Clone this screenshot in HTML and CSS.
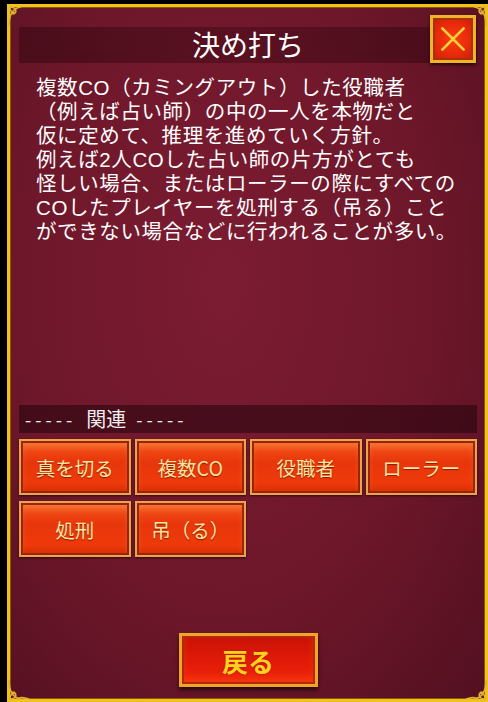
FILE: index.html
```html
<html lang="ja">

<head>
  <meta charset="utf-8">
  <title>決め打ち</title>
  <link rel="stylesheet" href="styles.css">
</head>

<body>

  <div class="frame">
    <!-- corner ornaments -->
    <svg class="corner tl" viewBox="0 0 24 24"><path d="M2 22 C2 10 6 4 14 3 M3 3 C8 3 10 6 8 9 C6 11 4 9 6 7 M3 3 C3 8 6 10 9 8" /></svg>
    <svg class="corner tr" viewBox="0 0 24 24"><path d="M22 22 C22 10 18 4 10 3 M21 3 C16 3 14 6 16 9 C18 11 20 9 18 7 M21 3 C21 8 18 10 15 8" /></svg>
    <svg class="corner bl" viewBox="0 0 24 24"><path d="M2 2 C2 14 6 20 14 21 M3 21 C8 21 10 18 8 15 C6 13 4 15 6 17 M3 21 C3 16 6 14 9 16 M10 21 C14 18 18 20 22 21" /></svg>
    <svg class="corner br" viewBox="0 0 24 24"><path d="M22 2 C22 14 18 20 10 21 M21 21 C16 21 14 18 16 15 C18 13 20 15 18 17 M21 21 C21 16 18 14 15 16 M14 21 C10 18 6 20 2 21" /></svg>

    <div class="head">
      <div class="title">決め打ち</div>
      <button class="close">
        <svg viewBox="0 0 30 30"><path d="M5 5 L25 25 M25 5 L5 25" /></svg>
      </button>
    </div>

    <div class="desc">
      複数CO（カミングアウト）した役職者<br>
      （例えば占い師）の中の一人を本物だと<br>
      仮に定めて、推理を進めていく方針。<br>
      例えば2人COした占い師の片方がとても<br>
      怪しい場合、またはローラーの際にすべての<br>
      COしたプレイヤーを処刑する（吊る）こと<br>
      ができない場合などに行われることが多い。
    </div>

    <div class="related">
      <span class="dash">-----</span><span class="label">関連</span><span class="dash">-----</span>
    </div>

    <div class="links">
      <button class="link">真を切る</button>
      <button class="link">複数CO</button>
      <button class="link">役職者</button>
      <button class="link">ローラー</button>
      <button class="link">処刑</button>
      <button class="link">吊（る）</button>
    </div>

    <div class="foot">
      <button class="back">戻る</button>
    </div>
  </div>

</body>

</html>
```

FILE: styles.css
```css
body {
  font-family: "Noto Sans CJK JP", "Noto Sans", sans-serif;
  background-color: #000;
  margin: 0;
  padding: 0;
  width: 488px;
  height: 702px;
  overflow: hidden;
}

.frame {
  position: relative;
  box-sizing: border-box;
  margin: 4px 0 0 7px;
  height: 698px;
  border: 3px solid #f2c21c;
  box-shadow: inset 0 0 0 1px #8a5a08;
  background: radial-gradient(ellipse at 45% 40%, #7c1c32 0%, #6e172a 55%, #521020 100%);
  padding: 20px 8px 0 9px;
  display: flex;
  flex-direction: column;
}

.corner {
  position: absolute;
  width: 24px;
  height: 24px;
  fill: none;
  stroke: #e0b030;
  stroke-width: 1.6;
}

.tl { top: -3px; left: -3px; }
.tr { top: -3px; right: -3px; }
.bl { bottom: -3px; left: -3px; }
.br { bottom: -3px; right: -3px; }

.head {
  position: relative;
}

.title {
  height: 36px;
  line-height: 34px;
  text-align: center;
  color: #fff;
  font-size: 28px;
  background: linear-gradient(90deg, rgba(50, 6, 16, 0.55), rgba(60, 8, 20, 0.45) 50%, rgba(50, 6, 16, 0.55));
}

.close {
  position: absolute;
  top: -12px;
  right: 1px;
  width: 46px;
  height: 48px;
  padding: 0;
  border: 3px solid #f0b426;
  box-shadow: inset 0 0 0 2px #a8300a, 0 2px 3px rgba(0, 0, 0, 0.6);
  background: radial-gradient(circle, #ff3a10 0%, #e0260a 70%, #c01c06 100%);
}

.close svg {
  width: 32px;
  height: 32px;
  fill: none;
  stroke: #ffd43a;
  stroke-width: 2.5;
  stroke-linecap: round;
}

/* narrow latin first so CO/2 stay slim, kana falls through to Noto */
.desc {
  margin-top: 13px;
  padding-left: 17px;
  font-family: "Liberation Sans Narrow", "Liberation Sans", "Noto Sans CJK JP", sans-serif;
  color: #fff;
  font-size: 20.5px;
  line-height: 24px;
  white-space: nowrap;
  letter-spacing: 0.6px;
  flex: 1;
}

.related {
  height: 28px;
  line-height: 28px;
  padding-left: 6px;
  color: #eee;
  font-size: 20px;
  background: rgba(35, 4, 12, 0.55);
}

.dash {
  font-size: 18px;
  letter-spacing: 4px;
}

.label {
  margin: 0 10px;
}

.links {
  display: grid;
  grid-template-columns: repeat(4, 1fr);
  gap: 6px 4px;
  margin-top: 6px;
}

.link {
  height: 56px;
  font-family: inherit;
  font-size: 19.5px;
  color: #ffe6a0;
  text-shadow: 0 1px 1px #8a1800;
  border: 2px solid #eaa44c;
  box-shadow: inset 0 0 0 2px #9a2406, inset 0 6px 6px rgba(255, 190, 110, 0.35), 0 1px 2px rgba(0, 0, 0, 0.6);
  background: linear-gradient(#f4561a, #e8360c 40%, #ee3a0a 80%, #d62c06);
}

.foot {
  display: flex;
  justify-content: center;
  margin: 76px 0 12px;
}

.back {
  width: 139px;
  height: 54px;
  font-family: inherit;
  font-size: 26px;
  font-weight: bold;
  color: #ffd21e;
  text-shadow: 0 0 2px #b01000;
  border: 3px solid #f2a428;
  box-shadow: inset 0 0 0 2px #b02a08, inset 0 -6px 8px rgba(255, 80, 20, 0.5), 0 3px 4px rgba(0, 0, 0, 0.6);
  background: linear-gradient(#c81206, #e01a08 50%, #f0240a);
}
```
